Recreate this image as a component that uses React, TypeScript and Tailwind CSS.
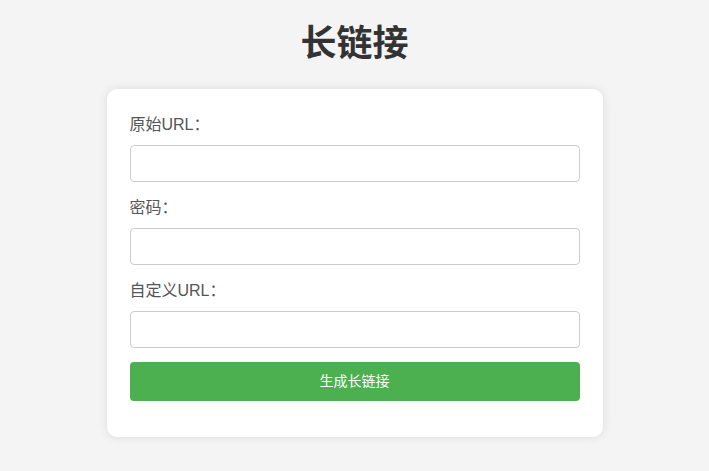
export default function App() {
  const fields = [
    { label: "原始URL：", name: "url" },
    { label: "密码：", name: "password" },
    { label: "自定义URL：", name: "custom" },
  ];

  return (
    <div
      className="min-h-screen bg-[#f4f4f4] flex flex-col items-center pt-6"
      style={{ fontFamily: '"Liberation Sans", "Noto Sans CJK SC", sans-serif' }}
    >
      <h1 className="text-[36px] leading-[40px] font-bold text-[#333]">长链接</h1>
      <form className="mt-[25px] w-[496px] bg-white rounded-[10px] shadow-[0_0_10px_rgba(0,0,0,0.1)] px-[23px] pt-6 pb-6">
        {fields.map((f) => (
          <div key={f.name} className="mb-[14px]">
            <label className="block text-[16px] leading-6 text-[#555] mb-2">{f.label}</label>
            <input
              name={f.name}
              className="block w-full h-[37px] border border-[#ccc] rounded-[4px] px-2 text-[14px] outline-none"
            />
          </div>
        ))}
        <button
          type="button"
          className="block w-full h-[39px] bg-[#4caf50] text-white text-[14px] rounded-[4px] mb-3"
        >
          生成长链接
        </button>
      </form>
    </div>
  );
}
